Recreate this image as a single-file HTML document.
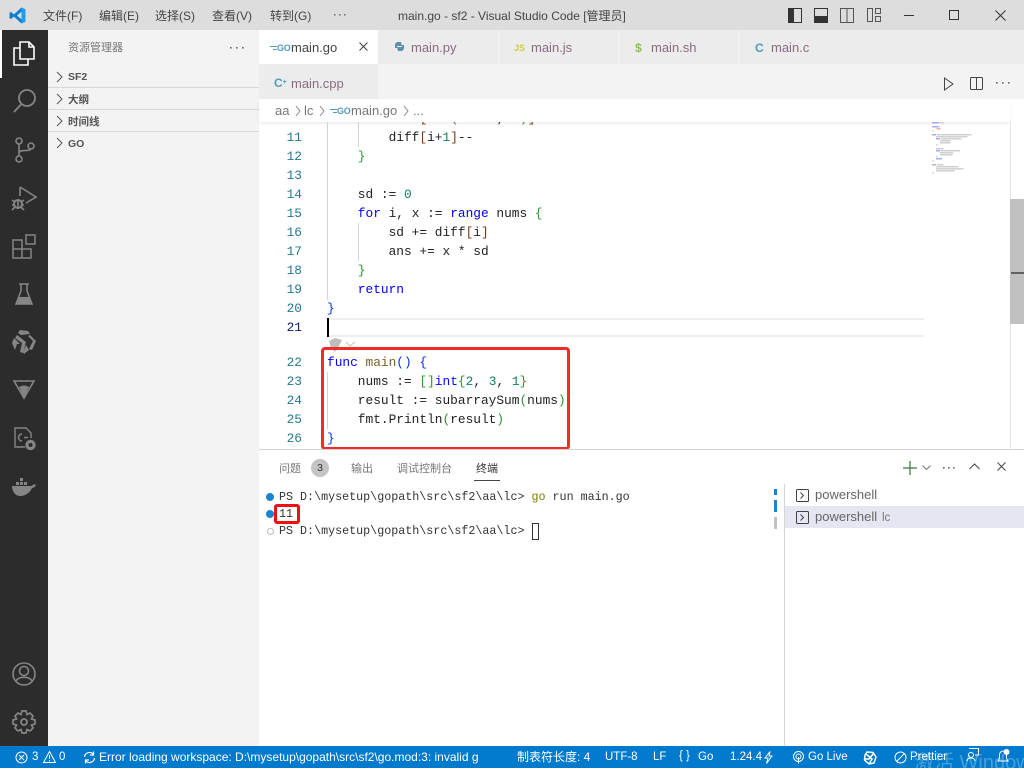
<!DOCTYPE html>
<html><head><meta charset="utf-8"><style>
*{box-sizing:border-box}
html,body{margin:0;padding:0;width:1024px;height:768px;overflow:hidden;background:#fff;font-family:"Liberation Sans","Noto Sans CJK SC",sans-serif}
.a{position:absolute}
.t{position:absolute;white-space:pre;line-height:18px}
.c{position:absolute;left:327px;white-space:pre;font:12.83px/19px "Liberation Mono",monospace;color:#222;height:19px}
.n{position:absolute;left:262px;width:40px;text-align:right;font:12.83px/19px "Liberation Mono",monospace;color:#237893;height:19px}
.k{color:#0000ff}.f{color:#795e26}.d{color:#098658}.b1{color:#0431fa}.b2{color:#319331}.b3{color:#7b3814}.g{color:#267f99}
.term{position:absolute;left:279px;white-space:pre;font:11.7px/17px "Liberation Mono",monospace;color:#333}
svg{position:absolute;overflow:visible}
.menu{top:7px;font-size:12px;color:#444}
.tab{font-size:13px;color:#8a6a7e;top:39px}
.sb{position:absolute;top:749px;color:#fff;font-size:11.5px;line-height:17px;white-space:pre}
.sec{left:68px;font-size:10.5px;font-weight:bold;color:#555}
.go{position:absolute;font-size:9px;font-weight:bold;color:#519aba;line-height:18px;letter-spacing:-.3px}
</style></head><body>
<!-- title bar -->
<div class="a" style="left:0;top:0;width:1024px;height:30px;background:#dddddd"></div>
<svg style="left:9px;top:7px" width="17" height="17" viewBox="0 0 17 17"><path d="M12.5 0.5L16.5 2.4V14.6L12.5 16.5L5 9.6L1.9 12L0.5 11.2V5.8L1.9 5L5 7.4ZM12.5 4.6L8 8.5L12.5 12.4Z" fill="#0a7fd0"/><path d="M12.5 0.5L16.5 2.4V14.6L12.5 16.5Z" fill="#1f9cf0"/></svg>
<div class="t menu" style="left:43px">文件(F)</div>
<div class="t menu" style="left:99px">编辑(E)</div>
<div class="t menu" style="left:155px">选择(S)</div>
<div class="t menu" style="left:212px">查看(V)</div>
<div class="t menu" style="left:270px">转到(G)</div>
<svg style="left:333px;top:14px" width="16" height="3" fill="#777"><rect x="1" y="0" width="1.6" height="1.6"/><rect x="6" y="0" width="1.6" height="1.6"/><rect x="11" y="0" width="1.6" height="1.6"/></svg>
<div class="t" style="left:398px;top:7px;font-size:12px;color:#444">main.go - sf2 - Visual Studio Code [管理员]</div>
<svg style="left:788px;top:8px" width="14" height="14"><rect x=".5" y=".5" width="13" height="14" fill="none" stroke="#333"/><rect x="1" y="1" width="5" height="13" fill="#333"/></svg>
<svg style="left:814px;top:8px" width="14" height="14"><rect x=".5" y=".5" width="13" height="14" fill="none" stroke="#333"/><rect x="1" y="8" width="12" height="6" fill="#333"/></svg>
<svg style="left:840px;top:8px" width="14" height="14"><rect x=".5" y=".5" width="13" height="14" fill="none" stroke="#555"/><path d="M7 1V14" stroke="#555"/></svg>
<svg style="left:867px;top:8px" width="14" height="14"><rect x=".5" y=".5" width="5" height="13" fill="none" stroke="#555"/><rect x="8.5" y=".5" width="5" height="5" fill="none" stroke="#555"/><rect x="8.5" y="8.5" width="5" height="5" fill="none" stroke="#555"/></svg>
<svg style="left:903px;top:10px" width="12" height="12"><path d="M1 5.5H11" stroke="#333"/></svg>
<svg style="left:949px;top:10px" width="11" height="11"><rect x=".5" y=".5" width="9" height="9" fill="none" stroke="#333"/></svg>
<svg style="left:995px;top:10px" width="11" height="11"><path d="M.5 .5L10.5 10.5M10.5 .5L.5 10.5" stroke="#333"/></svg>

<!-- activity bar -->
<div class="a" style="left:0;top:30px;width:48px;height:716px;background:#2c2c2c"></div>
<div class="a" style="left:0;top:30px;width:2px;height:48px;background:#fff"></div>
<svg style="left:12px;top:41px" width="24" height="26" fill="none" stroke="#fff" stroke-width="1.6"><path d="M8 1H17L22 6V18H8Z"/><path d="M17 1V6H22"/><path d="M8 7H2V24H16V18"/></svg>
<svg style="left:12px;top:88px" width="24" height="26" fill="none" stroke="#858585" stroke-width="1.8"><circle cx="15" cy="10" r="8"/><path d="M9.5 16L2 24"/></svg>
<svg style="left:14px;top:137px" width="22" height="26" fill="none" stroke="#858585" stroke-width="1.6"><circle cx="5" cy="4" r="3"/><circle cx="5" cy="22" r="3"/><circle cx="17" cy="9" r="3"/><path d="M5 7V19M5 16C5 12 16 15 16.5 12"/></svg>
<svg style="left:11px;top:185px" width="26" height="26" fill="none" stroke="#858585" stroke-width="1.6"><path d="M9 2V11M9 2L25 12L15 18"/><circle cx="7" cy="19" r="4" stroke-width="2"/><path d="M1 15L4 17M1 20H3M1 25L4 22M13 15L10 17M13 20H11M13 25L10 22M7 15V24"/></svg>
<svg style="left:12px;top:234px" width="25" height="25" fill="none" stroke="#858585" stroke-width="1.5"><path d="M1 6H10V24H1ZM1 15H19V24H10"/><rect x="14" y="1" width="9" height="9"/></svg>
<svg style="left:15px;top:283px" width="18" height="22" fill="none" stroke="#858585" stroke-width="1.5"><path d="M4 1H14M6 1V8L1 21H17L12 8V1"/><path d="M4 14H14L17 21H1Z" fill="#858585" stroke="none"/></svg>
<svg style="left:12px;top:330px" width="24" height="24" fill="#858585"><path d="M8 0L16 1L18 4L9 5L6 3Z"/><path d="M18 5L24 11L20 20L17 19L21 11L16 6Z"/><path d="M5 5L14 12L11 23L8 22L10 13L3 8Z"/><path d="M2 8L8 14H5L3 20L0 13Z"/><path d="M14 15L17 20L12 24L11 22Z"/></svg>
<svg style="left:13px;top:380px" width="22" height="19"><path d="M1 1H21L11 18Z" fill="none" stroke="#858585" stroke-width="1.6"/><path d="M6 7Q11 4 16 7L11 17Z" fill="#858585"/></svg>
<svg style="left:14px;top:427px" width="23" height="24" fill="none" stroke="#858585" stroke-width="1.4"><path d="M11 20H1V1H12L17 6V11"/><path d="M8 7A3.5 3.5 0 0 0 8 14M10 10.500H14"/><circle cx="16.500" cy="18" r="3.600" stroke-width="3.200"/></svg>
<svg style="left:12px;top:477px" width="24" height="19"><path d="M0 9H20C21 7 23 7 24 8C23 10 21 11 20 11C18 16 13 19 8 19C3 19 0 14 0 9Z" fill="#858585"/><path d="M4 5H7V8H4ZM8 5H11V8H8ZM12 5H15V8H12ZM8 1H11V4H8Z" fill="#858585"/></svg>
<svg style="left:12px;top:662px" width="24" height="24" fill="none" stroke="#858585" stroke-width="1.6"><circle cx="12" cy="12" r="11"/><circle cx="12" cy="9" r="4.5"/><path d="M4 19C6 14 18 14 20 19"/></svg>
<svg style="left:12px;top:710px" width="24" height="24" fill="none" stroke="#858585" stroke-width="1.7"><path d="M10 1H14L15 4.5L18 3L21 6L19.500 9L23 10V14L19.500 15L21 18L18 21L15 19.500L14 23H10L9 19.500L6 21L3 18L4.500 15L1 14V10L4.500 9L3 6L6 3L9 4.500Z"/><circle cx="12" cy="12" r="3"/></svg>

<!-- sidebar -->
<div class="a" style="left:48px;top:30px;width:211px;height:716px;background:#f3f3f3"></div>
<div class="t" style="left:68px;top:39px;font-size:11px;color:#777">资源管理器</div>
<svg style="left:229px;top:47px" width="16" height="3" fill="#666"><rect x="1" y="0" width="1.6" height="1.6"/><rect x="7" y="0" width="1.6" height="1.6"/><rect x="13" y="0" width="1.6" height="1.6"/></svg>
<div class="a" style="left:48px;top:87px;width:211px;height:1px;background:#d8d8d8"></div>
<div class="a" style="left:48px;top:109px;width:211px;height:1px;background:#d8d8d8"></div>
<div class="a" style="left:48px;top:131px;width:211px;height:1px;background:#d8d8d8"></div>
<svg style="left:56px;top:71px" width="8" height="90" fill="none" stroke="#555" stroke-width="1"><path d="M1 1L6 6L1 11M1 23L6 28L1 33M1 45L6 50L1 55M1 67L6 72L1 77"/></svg>
<div class="t sec" style="top:68px">SF2</div>
<div class="t sec" style="top:91px">大纲</div>
<div class="t sec" style="top:113px">时间线</div>
<div class="t sec" style="top:135px">GO</div>

<!-- tabs -->
<div class="a" style="left:259px;top:30px;width:765px;height:34px;background:#ececec"></div>
<div class="a" style="left:259px;top:64px;width:765px;height:35px;background:#f3f3f3"></div>
<div class="a" style="left:259px;top:30px;width:119px;height:34px;background:#fff"></div>
<div class="a" style="left:259px;top:64px;width:119px;height:35px;background:#ececec"></div>
<div class="a" style="left:498px;top:30px;width:1px;height:34px;background:#f3f3f3"></div>
<div class="a" style="left:618px;top:30px;width:1px;height:34px;background:#f3f3f3"></div>
<div class="a" style="left:738px;top:30px;width:1px;height:34px;background:#f3f3f3"></div>
<svg style="left:270px;top:46px" width="8" height="5" stroke="#519aba"><path d="M0 .5H7M3 3.500H7"/></svg>
<div class="go" style="left:277px;top:39px">GO</div>
<div class="t tab" style="left:291px;color:#444">main.go</div>
<svg style="left:359px;top:42px" width="9" height="9"><path d="M.5 .5L8.5 8.5M8.5 .5L.5 8.5" stroke="#444"/></svg>
<svg style="left:394px;top:41px" width="11" height="11"><path d="M3 1H7L8 5H3V7H1V3ZM8 10H4L3 6H8V4H10V8Z" fill="#5b8fb0"/></svg>
<div class="t tab" style="left:411px">main.py</div>
<div class="t" style="left:514px;top:39px;font-size:9px;font-weight:bold;color:#cbcb41">JS</div>
<div class="t tab" style="left:531px">main.js</div>
<div class="t" style="left:635px;top:39px;font-size:12px;font-weight:bold;color:#8dc149">$</div>
<div class="t tab" style="left:651px">main.sh</div>
<div class="t" style="left:755px;top:39px;font-size:12px;font-weight:bold;color:#519aba">C</div>
<div class="t tab" style="left:771px">main.c</div>
<div class="t" style="left:274px;top:74px;font-size:12px;font-weight:bold;color:#519aba">C<span style="font-size:7px;vertical-align:top">+</span></div>
<div class="t tab" style="left:291px;top:75px">main.cpp</div>
<svg style="left:944px;top:77px" width="10" height="14"><path d="M.5 1L9 7L.5 13Z" fill="none" stroke="#444"/></svg>
<svg style="left:970px;top:77px" width="13" height="13"><rect x=".5" y=".5" width="12" height="12" rx="1" fill="none" stroke="#444"/><path d="M6.5 1V12" stroke="#444"/></svg>
<svg style="left:996px;top:82px" width="16" height="3" fill="#666"><rect x="0" y="0" width="1.6" height="1.6"/><rect x="6" y="0" width="1.6" height="1.6"/><rect x="12" y="0" width="1.6" height="1.6"/></svg>

<!-- editor -->
<div class="a" style="left:259px;top:122px;width:765px;height:327px;overflow:hidden">
 <div class="c" style="left:130px;top:-13px">diff<span class="b3">[</span>max<span class="b2">(</span>i-num, <span class="d">0</span><span class="b2">)</span><span class="b3">]</span>++</div>
</div>

<!-- breadcrumb -->
<div class="a" style="left:259px;top:99px;width:751px;height:23px;background:#fff;box-shadow:0 2px 3px rgba(0,0,0,.07)"></div>
<div class="t" style="left:275px;top:102px;font-size:13px;color:#777">aa</div>
<svg style="left:295px;top:106px" width="6" height="10"><path d="M1 0L5 5L1 10" fill="none" stroke="#888"/></svg>
<div class="t" style="left:304px;top:102px;font-size:13px;color:#777">lc</div>
<svg style="left:319px;top:106px" width="6" height="10"><path d="M1 0L5 5L1 10" fill="none" stroke="#888"/></svg>
<svg style="left:330px;top:109px" width="8" height="5" stroke="#519aba"><path d="M0 .5H7M3 3.500H7"/></svg>
<div class="go" style="left:337px;top:102px">GO</div>
<div class="t" style="left:351px;top:102px;font-size:13px;color:#777">main.go</div>
<svg style="left:403px;top:106px" width="6" height="10"><path d="M1 0L5 5L1 10" fill="none" stroke="#888"/></svg>
<div class="t" style="left:413px;top:102px;font-size:13px;color:#777">...</div>

<div class="a" style="left:327px;top:122px;width:1px;height:178px;background:#d3d3d3"></div>
<div class="a" style="left:358px;top:122px;width:1px;height:25px;background:#d3d3d3"></div>
<div class="a" style="left:358px;top:223px;width:1px;height:38px;background:#d3d3d3"></div>
<div class="a" style="left:327px;top:372px;width:1px;height:57px;background:#d3d3d3"></div>

<div class="n" style="top:128px">11</div><div class="c" style="top:128px">        diff<span class="b3">[</span>i+<span class="d">1</span><span class="b3">]</span>--</div>
<div class="n" style="top:147px">12</div><div class="c" style="top:147px">    <span class="b2">}</span></div>
<div class="n" style="top:166px">13</div>
<div class="n" style="top:185px">14</div><div class="c" style="top:185px">    sd := <span class="d">0</span></div>
<div class="n" style="top:204px">15</div><div class="c" style="top:204px">    <span class="k">for</span> i, x := <span class="k">range</span> nums <span class="b2">{</span></div>
<div class="n" style="top:223px">16</div><div class="c" style="top:223px">        sd += diff<span class="b3">[</span>i<span class="b3">]</span></div>
<div class="n" style="top:242px">17</div><div class="c" style="top:242px">        ans += x * sd</div>
<div class="n" style="top:261px">18</div><div class="c" style="top:261px">    <span class="b2">}</span></div>
<div class="n" style="top:280px">19</div><div class="c" style="top:280px">    <span class="k">return</span></div>
<div class="n" style="top:299px">20</div><div class="c" style="top:299px"><span class="b1">}</span></div>
<div class="a" style="left:328px;top:318px;width:596px;height:19px;border-top:2px solid #eeeeee;border-bottom:2px solid #eeeeee"></div>
<div class="a" style="left:327px;top:318px;width:2px;height:19px;background:#000"></div>
<div class="n" style="top:318px;color:#0b216f">21</div>
<svg style="left:327px;top:337px" width="30" height="16"><path d="M2 4L8 1L15 3L12 9L8 15L4 11Z" fill="#bdbdbd"/><path d="M19 5L23 9L28 5" fill="none" stroke="#bdbdbd"/></svg>
<div class="n" style="top:353px">22</div><div class="c" style="top:353px"><span class="k">func</span> <span class="f">main</span><span class="b1">() {</span></div>
<div class="n" style="top:372px">23</div><div class="c" style="top:372px">    nums := <span class="b2">[]</span><span class="k">int</span><span class="b2">{</span><span class="d">2</span>, <span class="d">3</span>, <span class="d">1</span><span class="b2">}</span></div>
<div class="n" style="top:391px">24</div><div class="c" style="top:391px">    result := subarraySum<span class="b2">(</span>nums<span class="b2">)</span></div>
<div class="n" style="top:410px">25</div><div class="c" style="top:410px">    fmt.Println<span class="b2">(</span>result<span class="b2">)</span></div>
<div class="n" style="top:429px">26</div><div class="c" style="top:429px"><span class="b1">}</span></div>
<div class="a" style="left:321px;top:347px;width:249px;height:103px;border:3px solid #f22a2a;border-radius:4px"></div>

<!-- minimap -->
<svg style="left:920px;top:110px" width="60" height="70" shape-rendering="crispEdges"><g transform="scale(.3333)">
<g fill="#a9abf0"><rect x="36" y="36" width="21" height="5"/><rect x="36" y="48" width="18" height="5"/><rect x="36" y="72" width="12" height="5"/><rect x="48" y="84" width="12" height="5"/><rect x="48" y="120" width="12" height="5"/><rect x="48" y="144" width="18" height="5"/><rect x="36" y="162" width="12" height="5"/></g>
<g fill="#cfcfcf"><rect x="60" y="36" width="12" height="5"/><rect x="54" y="48" width="6" height="5"/><rect x="51" y="72" width="104" height="5"/><rect x="48" y="78" width="94" height="5"/><rect x="63" y="84" width="62" height="5"/><rect x="60" y="90" width="32" height="5"/><rect x="60" y="96" width="32" height="5"/><rect x="48" y="102" width="4" height="5"/><rect x="48" y="114" width="22" height="5"/><rect x="63" y="120" width="57" height="5"/><rect x="60" y="126" width="40" height="5"/><rect x="60" y="132" width="38" height="5"/><rect x="48" y="138" width="4" height="5"/><rect x="36" y="150" width="4" height="5"/><rect x="51" y="162" width="19" height="5"/><rect x="48" y="168" width="67" height="5"/><rect x="48" y="174" width="82" height="5"/><rect x="48" y="180" width="57" height="5"/><rect x="36" y="186" width="4" height="5"/><rect x="36" y="60" width="4" height="5"/></g>
<rect x="50" y="54" width="12" height="5" fill="#eeb0b0"/></g></svg>

<!-- scrollbar -->
<div class="a" style="left:1010px;top:122px;width:1px;height:327px;background:#e5e5e5"></div>
<div class="a" style="left:1010px;top:199px;width:14px;height:125px;background:#c1c1c1"></div>
<div class="a" style="left:1011px;top:272px;width:13px;height:2px;background:#606060"></div>

<!-- panel -->
<div class="a" style="left:259px;top:449px;width:765px;height:1px;background:#d4d4d4"></div>
<div class="t" style="left:279px;top:460px;font-size:11px;color:#777">问题</div>
<div class="a" style="left:311px;top:459px;width:18px;height:18px;border-radius:9px;background:#c4c4c4;color:#333;font-size:10.5px;line-height:18px;text-align:center">3</div>
<div class="t" style="left:351px;top:460px;font-size:11px;color:#777">输出</div>
<div class="t" style="left:397px;top:460px;font-size:11px;color:#777">调试控制台</div>
<div class="t" style="left:476px;top:460px;font-size:11px;color:#333">终端</div>
<div class="a" style="left:474px;top:480px;width:26px;height:1px;background:#444"></div>
<svg style="left:903px;top:461px" width="14" height="14"><path d="M7 0V14M0 7H14" stroke="#3a7a3a" stroke-width="1.2"/></svg>
<svg style="left:922px;top:465px" width="9" height="6"><path d="M.5 .5L4.5 4.5L8.5 .5" fill="none" stroke="#777"/></svg>
<svg style="left:943px;top:467px" width="14" height="3" fill="#666"><rect x="0" y="0" width="1.6" height="1.6"/><rect x="5" y="0" width="1.6" height="1.6"/><rect x="10" y="0" width="1.6" height="1.6"/></svg>
<svg style="left:969px;top:463px" width="11" height="7"><path d="M.5 6L5.5 1L10.5 6" fill="none" stroke="#444"/></svg>
<svg style="left:997px;top:462px" width="9" height="9"><path d="M.5 .5L8.5 8.5M8.5 .5L.5 8.5" stroke="#444"/></svg>

<div class="a" style="left:266px;top:493px;width:8px;height:8px;border-radius:4px;background:#1a85cf"></div>
<div class="a" style="left:266px;top:510px;width:8px;height:8px;border-radius:4px;background:#1a85cf"></div>
<div class="a" style="left:267px;top:528px;width:7px;height:7px;border-radius:4px;border:1px solid #bbb"></div>
<div class="term" style="top:489px">PS D:\mysetup\gopath\src\sf2\aa\lc&gt; <span style="color:#7a7a00">go</span> run main.go</div>
<div class="term" style="top:506px">11</div>
<div class="term" style="top:523px">PS D:\mysetup\gopath\src\sf2\aa\lc&gt;</div>
<div class="a" style="left:532px;top:523px;width:7px;height:17px;border:1px solid #333"></div>
<div class="a" style="left:274px;top:504px;width:26px;height:20px;border:3px solid #ee1111;border-radius:3px"></div>

<div class="a" style="left:774px;top:489px;width:3px;height:6px;background:#1a85cf"></div>
<div class="a" style="left:774px;top:500px;width:3px;height:12px;background:#1a85cf"></div>
<div class="a" style="left:774px;top:517px;width:3px;height:12px;background:#c1c1c1"></div>
<div class="a" style="left:784px;top:484px;width:1px;height:262px;background:#d4d4d4"></div>
<div class="a" style="left:785px;top:506px;width:239px;height:22px;background:#e4e6f1"></div>
<svg style="left:796px;top:489px" width="14" height="36" fill="none" stroke="#444"><rect x=".5" y=".5" width="12" height="12" rx="1"/><path d="M4.5 3.5L7.5 6.5L4.5 9.5"/><rect x=".5" y="22.500" width="12" height="12" rx="1"/><path d="M4.5 25.500L7.5 28.500L4.5 31.500"/></svg>
<div class="t" style="left:815px;top:486px;font-size:13px;color:#666">powershell</div>
<div class="t" style="left:815px;top:508px;font-size:13px;color:#666">powershell</div>
<div class="t" style="left:882px;top:509px;font-size:11.5px;color:#777">lc</div>

<!-- status bar -->
<div class="a" style="left:0;top:746px;width:1024px;height:22px;background:#007acc"></div>
<svg style="left:15px;top:751px" width="13" height="13" fill="none" stroke="#fff"><circle cx="6.5" cy="6.5" r="5.5"/><path d="M4 4L9 9M9 4L4 9"/></svg>
<div class="sb" style="left:32px">3</div>
<svg style="left:43px;top:751px" width="13" height="12" fill="none" stroke="#fff"><path d="M6.5 .5L12.5 11.5H.5Z"/><path d="M6.5 4V8M6.5 9V10.5"/></svg>
<div class="sb" style="left:59px">0</div>
<svg style="left:83px;top:751px" width="13" height="13" fill="none" stroke="#fff" stroke-width="1.2"><path d="M1.5 6A5 5 0 0 1 10.5 3.5M11.5 7A5 5 0 0 1 2.5 9.5M10.5 .5V4H7M2.5 12.5V9H6"/></svg>
<div class="sb" style="left:99px;font-size:12px">Error loading workspace: D:\mysetup\gopath\src\sf2\go.mod:3: invalid g</div>
<div class="sb" style="left:517px;font-size:12px">制表符长度: 4</div>
<div class="sb" style="left:605px">UTF-8</div>
<div class="sb" style="left:653px">LF</div>
<div class="sb" style="left:679px;top:748px">{ }</div>
<div class="sb" style="left:698px">Go</div>
<div class="sb" style="left:730px">1.24.4</div>
<svg style="left:764px;top:751px" width="9" height="13" fill="none" stroke="#fff"><path d="M6 .5L1 7H4L2.5 12.5L8 5H5Z"/></svg>
<svg style="left:792px;top:751px" width="13" height="13" fill="none" stroke="#fff"><circle cx="6.5" cy="5.5" r="5"/><circle cx="6.5" cy="5.5" r="2.5"/><path d="M6.5 6V12.5"/></svg>
<div class="sb" style="left:808px">Go Live</div>
<svg style="left:863px;top:751px" width="14" height="14" fill="none" stroke="#fff" stroke-width="1.5"><path d="M4 1L10 1.5L13 6L11 12L6 13L1.5 9L2 4ZM3 3L9 8L6 13M11 2L6 8H1"/></svg>
<svg style="left:894px;top:751px" width="13" height="13" fill="none" stroke="#fff"><circle cx="6.5" cy="6.5" r="5.5"/><path d="M2.5 10.5L10.5 2.5"/></svg>
<div class="sb" style="left:910px">Prettier</div>
<div class="sb" style="left:914px;top:753px;font-size:20px;color:rgba(255,255,255,.28);line-height:20px">激活 Windows</div>
<svg style="left:966px;top:748px" width="13" height="14" fill="none" stroke="#fff"><path d="M3 .5H12.5V7H9"/><circle cx="5" cy="7" r="2.5"/><path d="M1 13C1 9 9 9 9 13"/></svg>
<svg style="left:996px;top:749px" width="14" height="14" fill="none" stroke="#fff"><path d="M2 12H12C10 10 10.5 8 10.5 6C10.5 3 8 2 7 2C5 2 3.5 4 3.5 6C3.5 8 4 10 2 12Z"/><circle cx="10.5" cy="3" r="2.5" fill="#fff"/></svg>
</body></html>
